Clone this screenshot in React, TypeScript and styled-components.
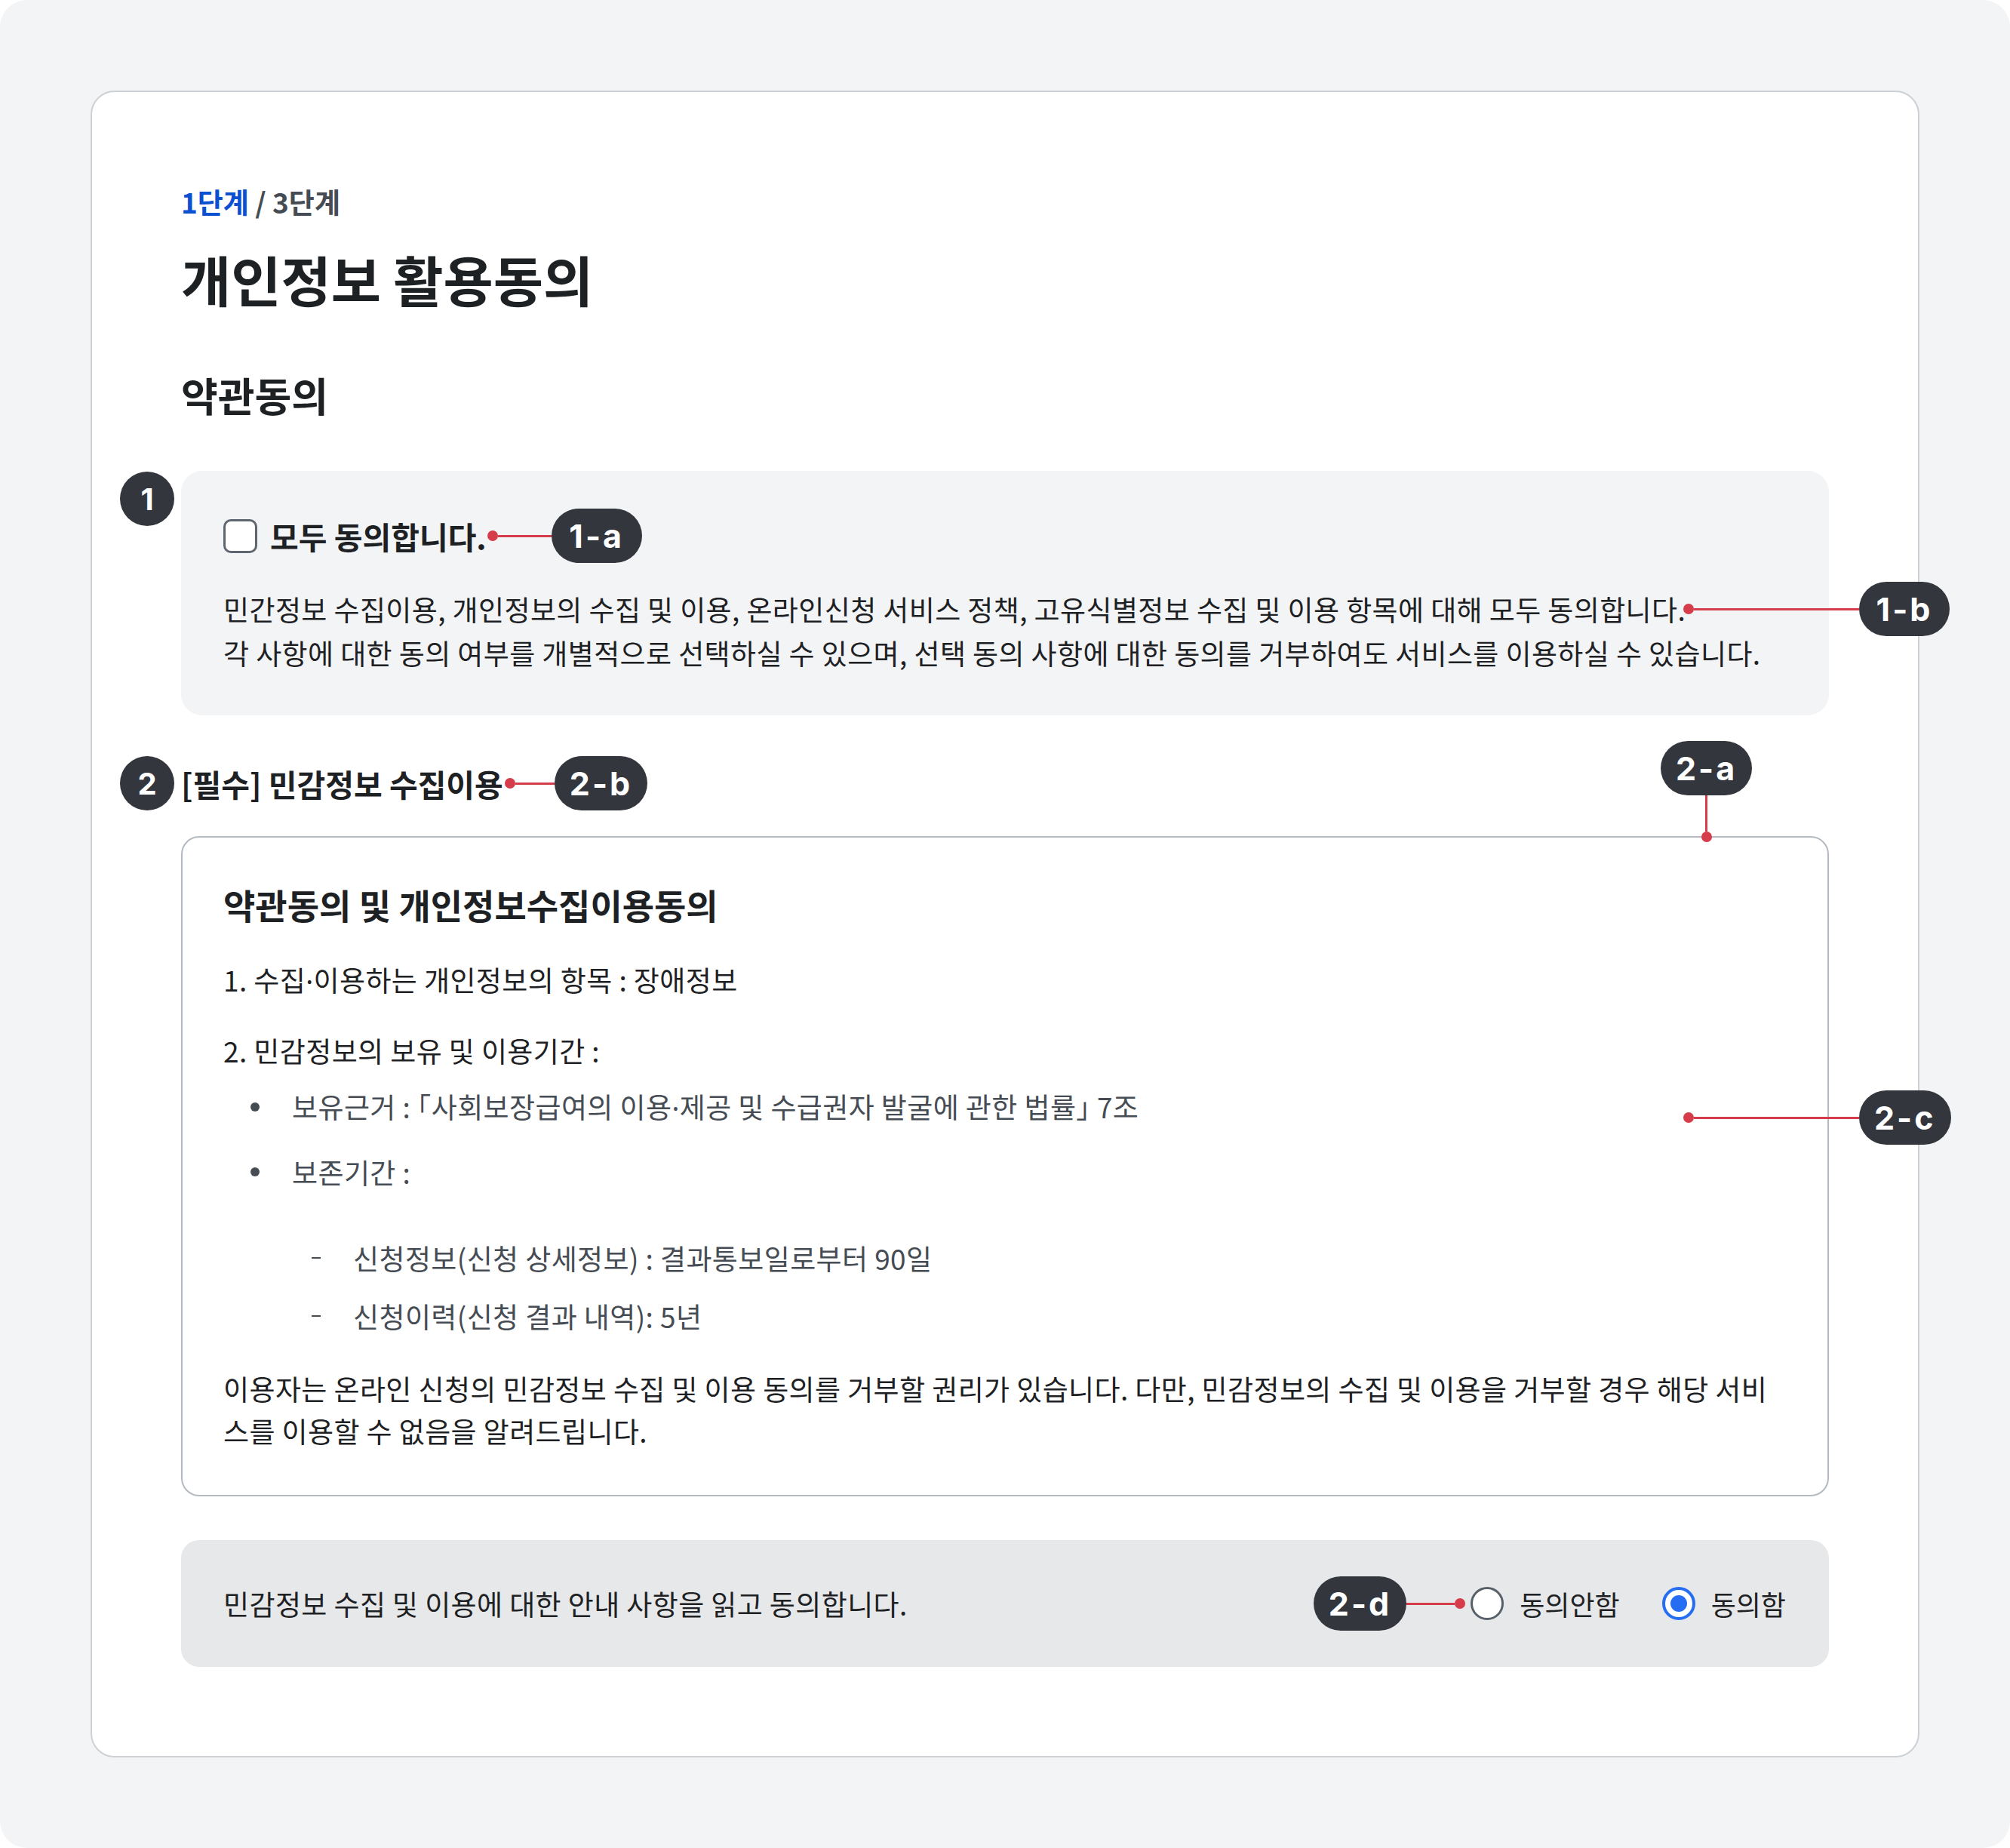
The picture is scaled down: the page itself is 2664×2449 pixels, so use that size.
import React from "react";
import styled, { createGlobalStyle } from "styled-components";

const GlobalStyle = createGlobalStyle`
  html, body { margin: 0; padding: 0; background: #ffffff; }
  body {
    font-family: "Noto Sans CJK KR", "Noto Sans", sans-serif;
    color: #1e2124;
  }
  *, *::before, *::after { box-sizing: border-box; }
  p, h1, h2, h3, ul, li { margin: 0; padding: 0; }
  ul { list-style: none; }
`;

const RED = "#d63d4a";
const DARK = "#33363d";

const Page = styled.div`
  width: 2664px;
  min-height: 2449px;
  background: #f3f4f6;
  border-radius: 36px;
  padding: 120px;
`;

const Card = styled.main`
  background: #ffffff;
  border: 2px solid #cdd1d6;
  border-radius: 32px;
  padding: 118px;
  display: flex;
  flex-direction: column;
`;

const StepLabel = styled.div`
  font-size: 37px;
  line-height: 54px;
  font-weight: 700;
  color: #464c53;
`;

const StepCurrent = styled.span`
  color: #0b50d0;
`;

const PageTitle = styled.h1`
  margin-top: 33px;
  font-size: 72px;
  line-height: 84px;
  font-weight: 700;
  color: #1e2124;
`;

const SectionTitle = styled.h2`
  margin-top: 79px;
  font-size: 53px;
  line-height: 66px;
  font-weight: 700;
  color: #1e2124;
`;

const AgreeAllBox = styled.section`
  position: relative;
  margin-top: 68px;
  background: #f3f4f6;
  border-radius: 28px;
  padding: 60px 56px 54px;
`;

const CheckRow = styled.label`
  display: flex;
  align-items: center;
  height: 52px;
`;

const CheckBox = styled.span`
  width: 45px;
  height: 45px;
  border: 3px solid #5f666f;
  border-radius: 10px;
  background: #ffffff;
  margin-right: 17px;
  flex: none;
`;

const CheckLabel = styled.span`
  font-size: 41px;
  line-height: 52px;
  font-weight: 700;
  color: #1e2124;
`;

const Description = styled.p`
  margin-top: 42px;
  font-size: 37px;
  line-height: 58px;
  letter-spacing: 0.4px;
  color: #1e2124;
`;

const NumberBadge = styled.span<{ $top?: string }>`
  position: absolute;
  left: -81px;
  top: ${(p) => p.$top ?? "1px"};
  transform: ${(p) => (p.$top ? "translateY(-50%)" : "none")};
  width: 72px;
  height: 72px;
  border-radius: 50%;
  background: ${DARK};
  color: #ffffff;
  font-family: Inter, "Noto Sans", sans-serif;
  font-weight: 700;
  font-size: 40px;
  display: flex;
  align-items: center;
  justify-content: center;
`;

const SectionHeading = styled.h3`
  position: relative;
  margin-top: 62px;
  display: flex;
  align-items: center;
  height: 56px;
  font-size: 41px;
  font-weight: 700;
  color: #1e2124;
`;

const TermsBox = styled.section`
  position: relative;
  margin-top: 42px;
  border: 2px solid #b4bac1;
  border-radius: 24px;
  padding: 58px 54px 57px;
`;

const TermsTitle = styled.h3`
  font-size: 46px;
  line-height: 60px;
  font-weight: 700;
  color: #1e2124;
`;

const TermsItem = styled.p<{ $mt: number }>`
  margin-top: ${(p) => p.$mt}px;
  font-size: 37px;
  line-height: 56px;
  letter-spacing: 0.4px;
  color: #1e2124;
`;

const BulletList = styled.ul<{ $mt: number }>`
  margin-top: ${(p) => p.$mt}px;
  padding-left: 36px;
`;

const BulletItem = styled.li<{ $mt?: number }>`
  margin-top: ${(p) => p.$mt ?? 0}px;
  display: flex;
  align-items: center;
  font-size: 37px;
  line-height: 56px;
  letter-spacing: 0.4px;
  color: #464c53;
  &::before {
    content: "";
    width: 12px;
    height: 12px;
    border-radius: 50%;
    background: #464c53;
    margin-right: 43px;
    flex: none;
  }
`;

const DashList = styled.ul<{ $mt: number }>`
  margin-top: ${(p) => p.$mt}px;
  padding-left: 113px;
`;

const DashItem = styled.li<{ $mt?: number }>`
  margin-top: ${(p) => p.$mt ?? 0}px;
  display: flex;
  align-items: center;
  font-size: 37px;
  line-height: 56px;
  letter-spacing: 0.4px;
  color: #464c53;
  &::before {
    content: "";
    width: 12px;
    height: 2px;
    background: #464c53;
    margin: 0 43px 0 4px;
    flex: none;
  }
`;

const ItemText = styled.span``;

/* narrow punctuation (the CJK font draws these full width) */
const MidDot = styled.span`
  font-family: "Noto Sans", "DejaVu Sans", sans-serif;
`;

const Bracket = styled.span`
  font-feature-settings: "halt" 1;
`;

const ConsentBar = styled.div`
  margin-top: 58px;
  height: 168px;
  background: #e6e8ea;
  border-radius: 24px;
  padding: 0 57px 0 56px;
  display: flex;
  align-items: center;
  justify-content: space-between;
`;

const ConsentText = styled.p`
  font-size: 37px;
  line-height: 56px;
  letter-spacing: 0.4px;
  color: #1e2124;
`;

const RadioGroup = styled.div`
  display: flex;
  align-items: center;
`;

const RadioOption = styled.label<{ $ml?: number }>`
  display: flex;
  align-items: center;
  gap: 21px;
  margin-left: ${(p) => p.$ml ?? 0}px;
  font-size: 36px;
  line-height: 56px;
  color: #1e2124;
`;

const RadioCircle = styled.span<{ $checked?: boolean }>`
  width: 44px;
  height: 44px;
  border-radius: 50%;
  flex: none;
  background: #ffffff;
  border: ${(p) => (p.$checked ? "4px solid #256ef4" : "3px solid #58616a")};
  display: flex;
  align-items: center;
  justify-content: center;
  &::after {
    content: "";
    display: ${(p) => (p.$checked ? "block" : "none")};
    width: 22px;
    height: 22px;
    border-radius: 50%;
    background: #256ef4;
  }
`;

/* ---------- annotation callouts ---------- */

const Dot = styled.span`
  width: 14px;
  height: 14px;
  border-radius: 50%;
  background: ${RED};
  flex: none;
`;

const HLine = styled.span<{ $len: number }>`
  width: ${(p) => p.$len}px;
  height: 3px;
  background: ${RED};
  flex: none;
`;

const VLine = styled.span<{ $len: number }>`
  width: 3px;
  height: ${(p) => p.$len}px;
  background: ${RED};
  flex: none;
`;

const Pill = styled.span`
  height: 72px;
  min-width: 120px;
  padding: 0 20px;
  border-radius: 36px;
  background: ${DARK};
  color: #ffffff;
  font-family: Inter, "Noto Sans", sans-serif;
  font-weight: 700;
  font-size: 43px;
  letter-spacing: 3px;
  display: inline-flex;
  align-items: center;
  justify-content: center;
  flex: none;
`;

const InlineCallout = styled.span<{ $ml?: number; $mr?: number }>`
  display: inline-flex;
  align-items: center;
  margin-left: ${(p) => p.$ml ?? 0}px;
  margin-right: ${(p) => p.$mr ?? 0}px;
`;

const FloatCallout = styled.span<{ $left: number; $top: number }>`
  position: absolute;
  left: ${(p) => p.$left}px;
  top: ${(p) => p.$top}px;
  transform: translateY(-50%);
  display: flex;
  align-items: center;
  z-index: 2;
`;

const TopCallout = styled.span<{ $left: number }>`
  position: absolute;
  left: ${(p) => p.$left}px;
  bottom: calc(100% - 6px);
  display: flex;
  flex-direction: column;
  align-items: center;
  z-index: 2;
`;

export default function App() {
  return (
    <>
      <GlobalStyle />
      <Page>
        <Card>
          <StepLabel>
            <StepCurrent>1단계</StepCurrent> / 3단계
          </StepLabel>
          <PageTitle>개인정보 활용동의</PageTitle>
          <SectionTitle>약관동의</SectionTitle>

          <AgreeAllBox>
            <NumberBadge>1</NumberBadge>
            <CheckRow>
              <CheckBox />
              <CheckLabel>모두 동의합니다.</CheckLabel>
              <InlineCallout $ml={1}>
                <Dot />
                <HLine $len={71} />
                <Pill>1-a</Pill>
              </InlineCallout>
            </CheckRow>
            <Description>
              민간정보 수집이용, 개인정보의 수집 및 이용, 온라인신청 서비스 정책, 고유식별정보 수집 및 이용 항목에 대해 모두 동의합니다.
              <br />
              각 사항에 대한 동의 여부를 개별적으로 선택하실 수 있으며, 선택 동의 사항에 대한 동의를 거부하여도 서비스를 이용하실 수 있습니다.
            </Description>
            <FloatCallout $left={1991} $top={183}>
              <Dot />
              <HLine $len={219} />
              <Pill>1-b</Pill>
            </FloatCallout>
          </AgreeAllBox>

          <SectionHeading>
            <NumberBadge $top="50%">2</NumberBadge>
            [필수] 민감정보 수집이용
            <InlineCallout $ml={2}>
              <Dot />
              <HLine $len={52} />
              <Pill>2-b</Pill>
            </InlineCallout>
          </SectionHeading>

          <TermsBox>
            <TopCallout $left={1959}>
              <Pill>2-a</Pill>
              <VLine $len={48} />
              <Dot />
            </TopCallout>
            <TermsTitle>약관동의 및 개인정보수집이용동의</TermsTitle>
            <TermsItem $mt={42}>
              1. 수집<MidDot>·</MidDot>이용하는 개인정보의 항목 : 장애정보
            </TermsItem>
            <TermsItem $mt={36}>2. 민감정보의 보유 및 이용기간 :</TermsItem>
            <BulletList $mt={18}>
              <BulletItem>
                <ItemText>
                  보유근거 : <Bracket>「</Bracket>사회보장급여의 이용<MidDot>·</MidDot>제공 및 수급권자 발굴에 관한 법률<Bracket>」</Bracket> 7조
                </ItemText>
              </BulletItem>
              <BulletItem $mt={29}>보존기간 :</BulletItem>
            </BulletList>
            <DashList $mt={58}>
              <DashItem>신청정보(신청 상세정보) : 결과통보일로부터 90일</DashItem>
              <DashItem $mt={21}>신청이력(신청 결과 내역): 5년</DashItem>
            </DashList>
            <TermsItem $mt={40}>
              이용자는 온라인 신청의 민감정보 수집 및 이용 동의를 거부할 권리가 있습니다. 다만, 민감정보의 수집 및 이용을 거부할 경우 해당 서비
              <br />
              스를 이용할 수 없음을 알려드립니다.
            </TermsItem>
            <FloatCallout $left={1989} $top={371}>
              <Dot />
              <HLine $len={219} />
              <Pill>2-c</Pill>
            </FloatCallout>
          </TermsBox>

          <ConsentBar>
            <ConsentText>민감정보 수집 및 이용에 대한 안내 사항을 읽고 동의합니다.</ConsentText>
            <RadioGroup>
              <InlineCallout $mr={7}>
                <Pill>2-d</Pill>
                <HLine $len={64} />
                <Dot />
              </InlineCallout>
              <RadioOption>
                <RadioCircle />
                동의안함
              </RadioOption>
              <RadioOption $ml={56}>
                <RadioCircle $checked />
                동의함
              </RadioOption>
            </RadioGroup>
          </ConsentBar>
        </Card>
      </Page>
    </>
  );
}
